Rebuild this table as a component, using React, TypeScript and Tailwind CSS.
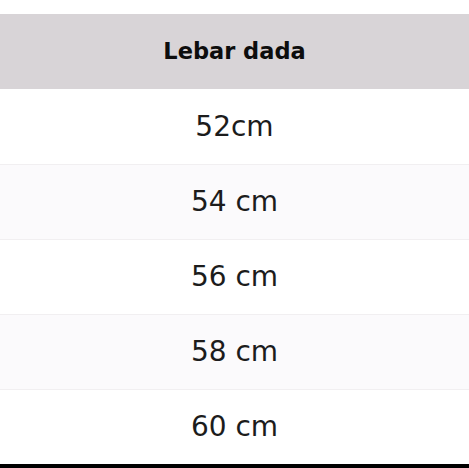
import React from 'react';

const sizes = ['52cm', '54 cm', '56 cm', '58 cm', '60 cm'];

const App: React.FC = () => {
  return (
    <div className="w-[469px] h-[468px] bg-white flex flex-col overflow-hidden" style={{ fontFamily: '"DejaVu Sans", Verdana, sans-serif' }}>
      <div className="h-[14px] shrink-0 bg-white" />

      {/* Header */}
      <div className="h-[75px] shrink-0 bg-[#d8d4d7] flex items-center justify-center">
        <span className="text-[22.5px] font-bold text-[#0d0d0d]">Lebar dada</span>
      </div>

      {/* Rows */}
      {sizes.map((s, i) => (
        <div
          key={s}
          className={`h-[75px] shrink-0 flex items-center justify-center ${i > 0 ? 'border-t border-[#f1eff1]' : ''} ${i % 2 === 1 ? 'bg-[#fbfafc]' : 'bg-white'}`}
        >
          <span className="text-[28px] text-[#1c1c1c]">{s}</span>
        </div>
      ))}

      <div className="flex-1 bg-black" />
    </div>
  );
};

export default App;
